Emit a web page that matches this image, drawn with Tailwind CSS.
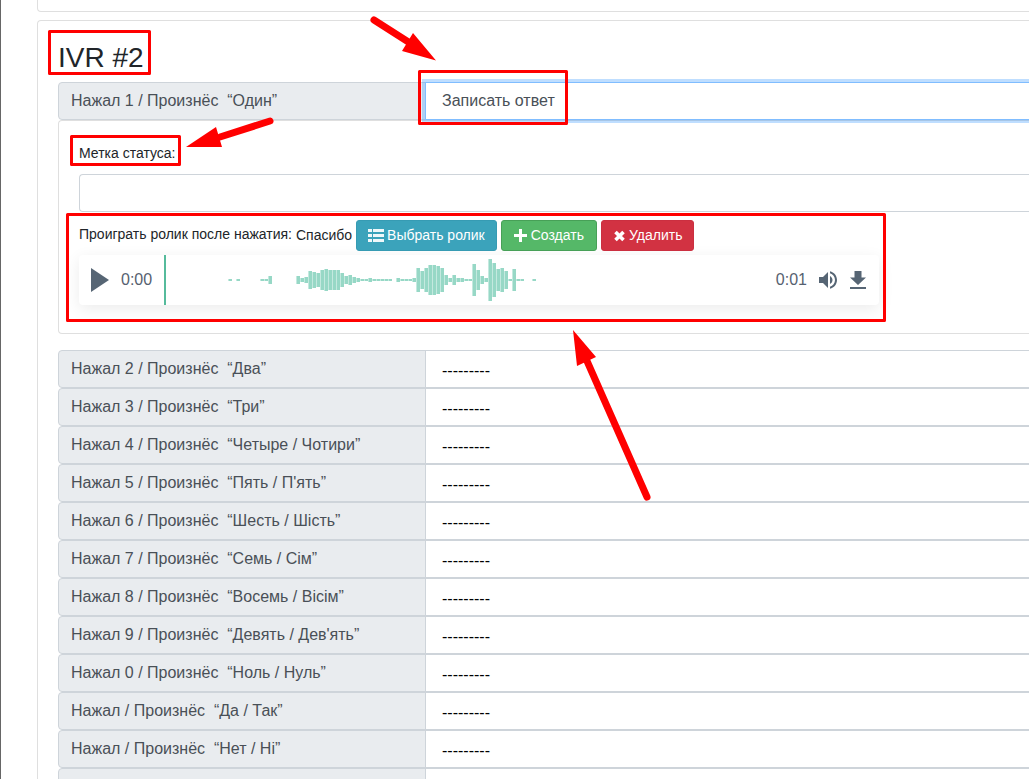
<!DOCTYPE html>
<html lang="ru">
<head>
<meta charset="utf-8">
<meta name="viewport" content="width=device-width, initial-scale=1">
<title>IVR #2</title>
<script src="https://cdn.jsdelivr.net/npm/@tailwindcss/browser@4"></script>
</head>
<body class="bg-white text-[#212529] font-['Liberation_Sans',Arial,sans-serif]">
<main class="relative h-screen overflow-hidden border-l border-[#666] pl-9">
  <div class="h-3 rounded-bl border-b border-l border-[#dfdfdf]"></div>

  <section class="mt-2 rounded-tl border-t border-l border-[#dfdfdf] pt-5 pl-5">
    <h2 class="mb-2 text-[28px] leading-[33px]">IVR #2</h2>

    <div class="flex">
      <label for="key1" class="h-[38px] w-[368px] shrink-0 whitespace-pre rounded-l border border-[#ced4da] bg-[#e9ecef] px-3 text-base leading-9 text-[#495057]">Нажал 1 / Произнёс  “Один”</label>
      <select id="key1" class="relative -ml-px h-[38px] min-w-0 flex-1 appearance-none border border-r-0 border-[#80bdff] bg-white px-4 text-base text-[#495057] outline-none ring-3 ring-[#007bff]/25">
        <option>Записать ответ</option>
      </select>
    </div>

    <div class="rounded-l border border-r-0 border-[#dfdfdf] pt-5 pb-7 pl-5">
      <label for="status" class="block text-sm leading-6">Метка статуса:</label>
      <input id="status" type="text" class="mt-[9px] block h-[38px] w-full rounded-l border border-r-0 border-[#ced4da] px-3">

      <div class="mt-2 flex items-center gap-1 text-sm">
        <span class="pb-1">Проиграть ролик после нажатия:</span>
        <span class="pb-0.5">Спасибо</span>
        <button type="button" class="flex h-[31px] items-center gap-[3px] rounded-[3px] border border-[#369bb3] bg-[#3ba3bb] px-[11px] text-white">
          <svg class="h-4 w-4" viewBox="0 0 16 16" fill="#fff"><path d="M0 1h4v3H0zM5 1h11v3H5zM0 6h4v3H0zM5 6h11v3H5zM0 11h4v3H0zM5 11h11v3H5z" opacity=".92"/></svg>
          <span class="pb-0.5">Выбрать ролик</span>
        </button>
        <button type="button" class="flex h-[31px] items-center gap-1 rounded-[3px] border border-[#47a057] bg-[#55b868] px-3 text-white">
          <svg class="h-[13px] w-[13px]" viewBox="0 0 13 13" fill="#fff"><path d="M5 0h3v5h5v3H8v5H5V8H0V5h5z"/></svg>
          <span class="pb-0.5">Создать</span>
        </button>
        <button type="button" class="flex h-[31px] items-center gap-[3px] rounded-[3px] border border-[#cb2f40] bg-[#d23242] px-[11px] text-white">
          <svg class="h-3 w-[13px]" viewBox="0 0 13 12"><path d="M2.500 2l8 8M10.500 2l-8 8" stroke="#fff" stroke-width="3.600"/></svg>
          <span class="pb-0.5">Удалить</span>
        </button>
      </div>

      <div class="mt-1 flex h-[50px] max-w-[800px] items-center rounded bg-white pr-[13px] pl-3 text-base text-[#566170] shadow-[0_4px_16px_rgba(0,0,0,0.08)]">
        <button type="button" aria-label="Воспроизвести">
          <svg class="h-6 w-[18px]" viewBox="0 0 18 24" fill="#566574"><path d="M0 0l18 12L0 24z"/></svg>
        </button>
        <span class="ml-3">0:00</span>
        <div class="ml-3 h-[50px] min-w-0 flex-1">
          <svg class="h-[50px] w-[600px]" viewBox="0 0 600 50" shape-rendering="crispEdges">
            <g id="wave"></g>
            <path d="M0 0h2v50H0z" fill="#56bb9c"/>
          </svg>
        </div>
        <span>0:01</span>
        <button type="button" aria-label="Громкость" class="ml-3">
          <svg class="h-[18px] w-[18px]" viewBox="0 0 18 18" fill="#566574"><path d="M0 6v6h4l5 5V1L4 6zM13.500 9c0-1.770-1.020-3.290-2.500-4.030v8.050c1.480-.730 2.500-2.250 2.500-4.020zM11 .230v2.060c2.890.860 5 3.540 5 6.710s-2.110 5.850-5 6.710v2.060c4.010-.910 7-4.490 7-8.770S15.010 1.140 11 .230z"/></svg>
        </button>
        <a href="#" aria-label="Скачать" class="ml-[13px]">
          <svg class="h-[18px] w-4" viewBox="0 0 16 18" fill="#566574"><path d="M4.500 0h7v6.500H16L8 14 0 6.500h4.500zM0 16h16v2H0z"/></svg>
        </a>
      </div>
    </div>

    <div id="rows" class="mt-4"></div>
  </section>

  <svg class="pointer-events-none absolute top-0 -left-px h-[520px] w-[900px]" viewBox="0 0 900 520">
    <g fill="none" stroke="#f00" stroke-width="3" stroke-linejoin="round">
      <rect x="49.500" y="31.500" width="100" height="42"/>
      <rect x="419.500" y="71.500" width="147" height="52"/>
      <rect x="71.500" y="136.500" width="108" height="28"/>
      <rect x="67.500" y="214.500" width="817" height="106"/>
    </g>
    <g stroke="#f00" stroke-width="7" stroke-linecap="round">
      <path d="M374 20l36 23M270 121l-50 16M647 497l-60-136"/>
    </g>
    <path d="M436 60.500L413 33l-11 18zM186 147l30-20 6 20zM573 330l23 27-19 9z" fill="#f00"/>
  </svg>
</main>

<script>
const answers = [
  'Нажал 2 / Произнёс  “Два”', 'Нажал 3 / Произнёс  “Три”',
  'Нажал 4 / Произнёс  “Четыре / Чотири”', "Нажал 5 / Произнёс  “Пять / П'ять”",
  'Нажал 6 / Произнёс  “Шесть / Шість”', 'Нажал 7 / Произнёс  “Семь / Сім”',
  'Нажал 8 / Произнёс  “Восемь / Вісім”', "Нажал 9 / Произнёс  “Девять / Дев'ять”",
  'Нажал 0 / Произнёс  “Ноль / Нуль”', 'Нажал / Произнёс  “Да / Так”',
  'Нажал / Произнёс  “Нет / Ні”', ''
];
document.getElementById('rows').innerHTML = answers.map((text, i) => `
  <div class="flex">
    <label for="answer${i}" class="h-[38px] w-[368px] shrink-0 whitespace-pre rounded-l border border-[#ced4da] bg-[#e9ecef] px-3 text-base leading-9 text-[#495057]">${text}</label>
    <select id="answer${i}" class="-ml-px h-[38px] min-w-0 flex-1 appearance-none border border-r-0 border-[#ced4da] bg-white px-4 pt-1 text-base text-black"><option>---------</option></select>
  </div>`).join('');

// Heights of the waveform bars, one every 4px; 0 is silence.
const levels = [
  2,0,2,0,0,0,0,0,2,2,8,0,0,0,0,0,0,8,4,6,18,16,14,20,22,20,20,20,14,8,10,6,4,2,2,4,
  2,2,2,2,2,0,4,2,2,2,4,24,18,24,30,30,28,24,10,4,10,4,4,2,2,32,20,8,4,42,34,22,24,18,2,22,2,2,0,0,2
];
document.getElementById('wave').innerHTML = levels.map((h, i) => {
  const x = 64 + i * 4, y = 25 - h / 2;
  return h ? `<rect x="${x}" y="${y}" width="1" height="${h}" fill="#c4e9df"/><rect x="${x + 1}" y="${y}" width="3" height="${h}" fill="#97d8c6"/>` : '';
}).join('');
</script>
</body>
</html>
